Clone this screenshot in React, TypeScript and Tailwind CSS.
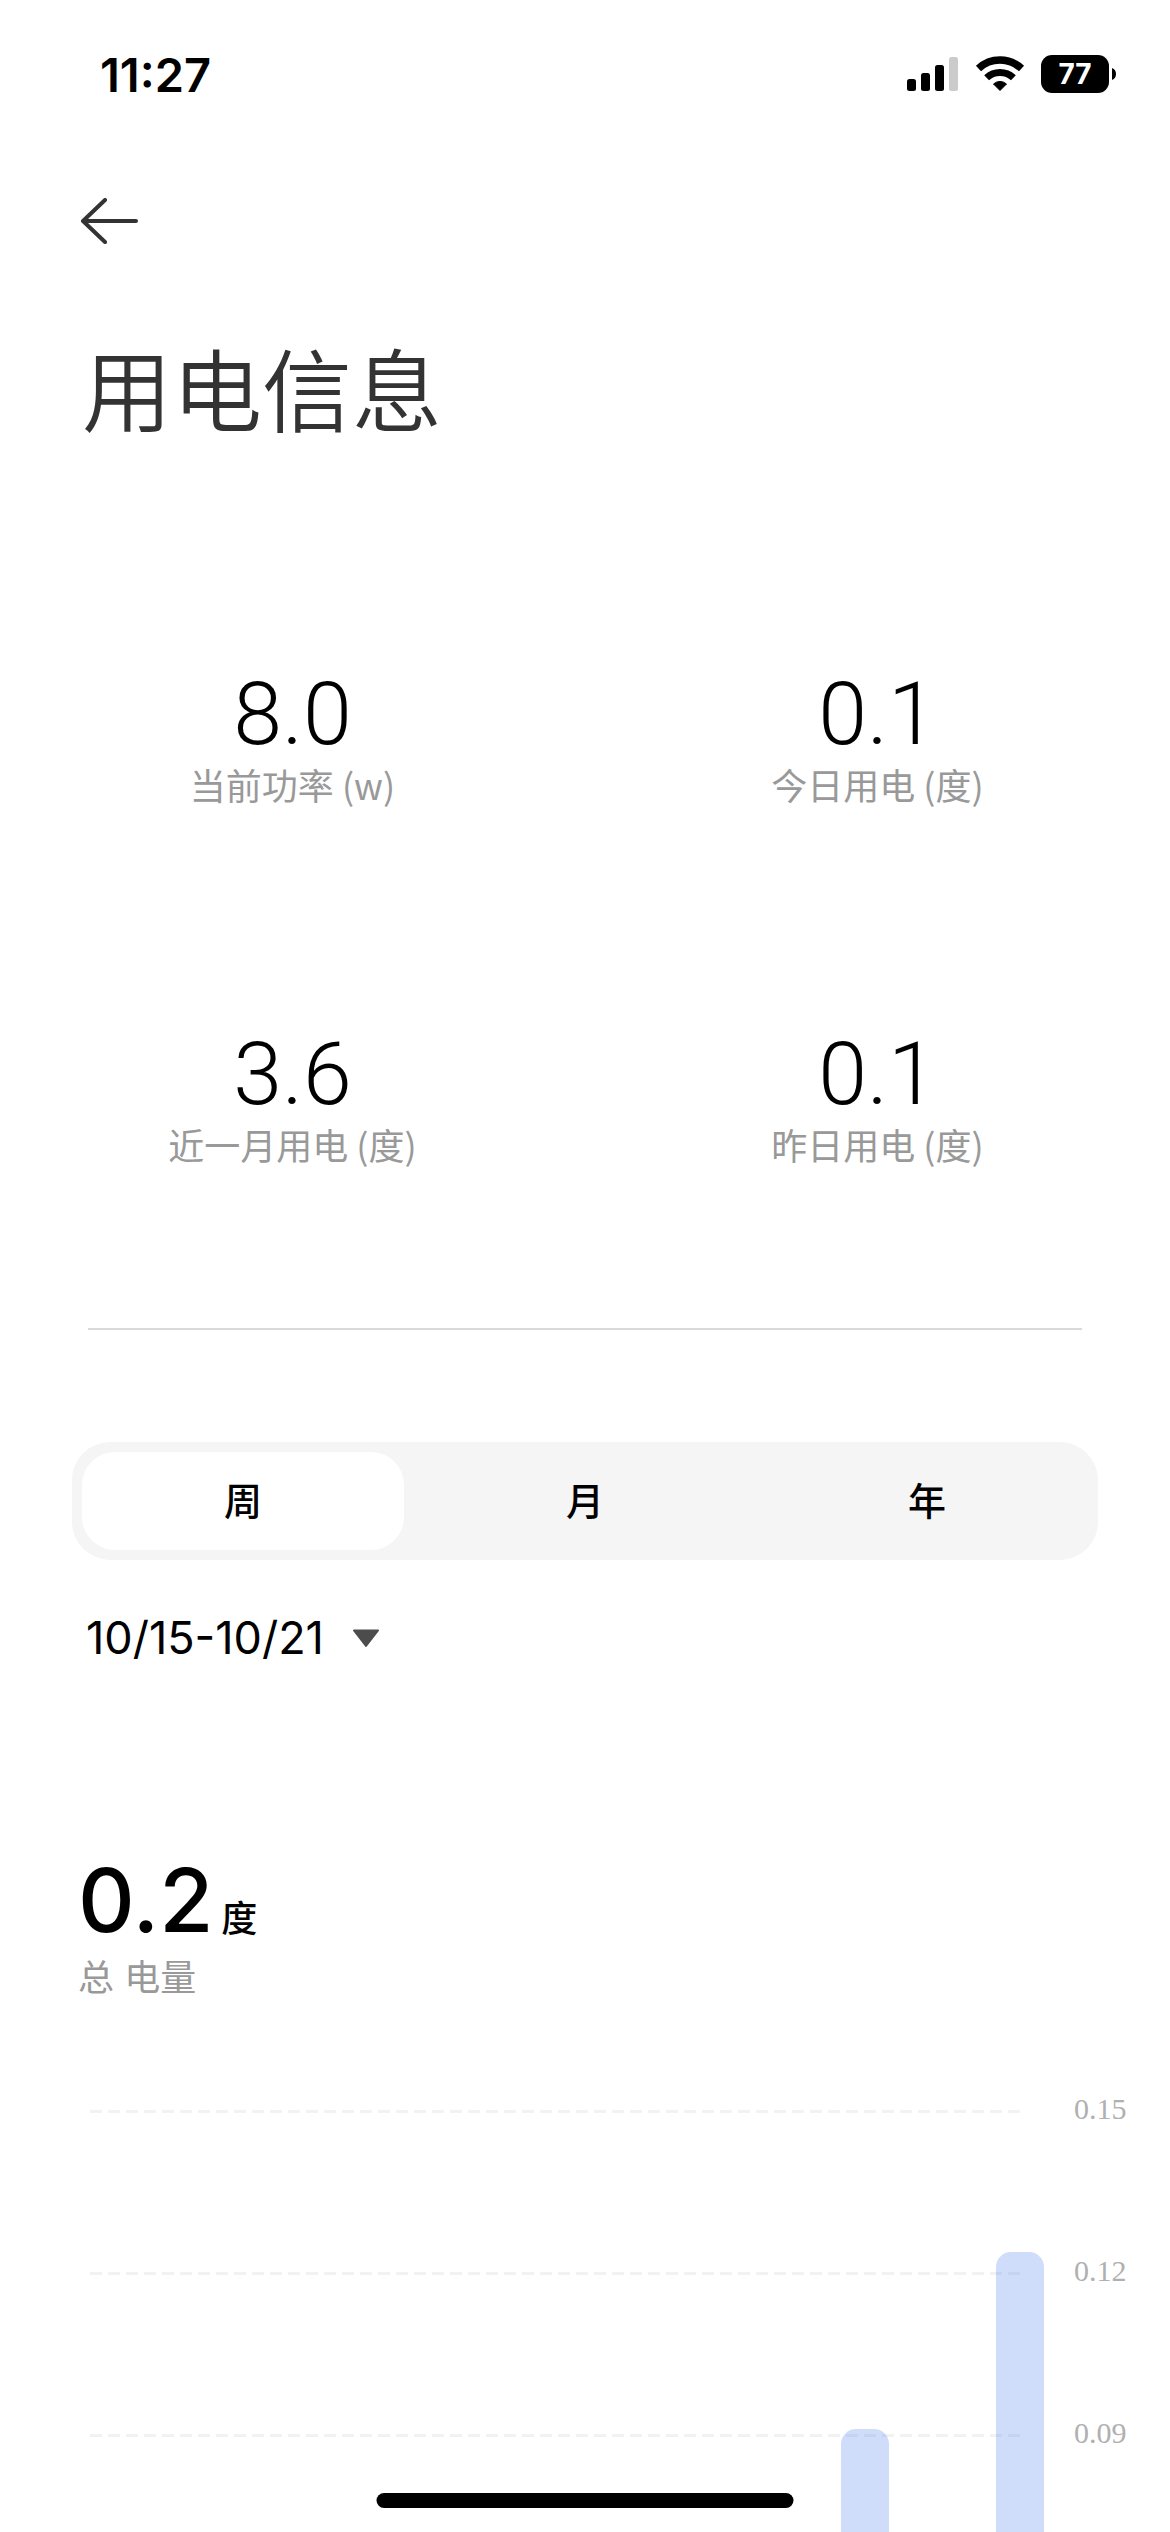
import React, { useState } from "react";

const stats = [
  { value: "8.0", label: "当前功率 (w)" },
  { value: "0.1", label: "今日用电 (度)" },
  { value: "3.6", label: "近一月用电 (度)" },
  { value: "0.1", label: "昨日用电 (度)" },
];

const periods = ["周", "月", "年"];

const MAX = 0.15;
const ticks = ["0.15", "0.12", "0.09"];
const usage = [0, 0, 0, 0, 0, 0.0911, 0.1239];

function StatusBar() {
  return (
    <div className="flex h-[148px] items-center justify-between pl-[100px] pr-[54px]">
      <span className="text-[47px] leading-none font-semibold">11:27</span>
      <div className="flex items-center">
        {/* Signal */}
        <svg className="mr-4 h-[38px] w-[52px]" viewBox="0 0 52 38">
          <rect x="0" y="24" width="9" height="12" rx="2.5" />
          <rect x="14" y="18" width="9" height="18" rx="2.5" />
          <rect x="28" y="10" width="9" height="26" rx="2.5" />
          <rect x="42" y="2" width="9" height="34" rx="2.5" fill="#cbcbcb" />
        </svg>
        {/* Wifi */}
        <svg className="mr-4 h-[38px] w-[50px]" viewBox="0 0 50 38">
          <path d="M3.5 13.5A31.5 31.5 0 0 1 46.5 13.5" fill="none" stroke="#000" strokeWidth="7.5" />
          <path d="M11.6 22.8A19.5 19.5 0 0 1 38.4 22.8" fill="none" stroke="#000" strokeWidth="7" />
          <path d="M25 35.5L18.5 29A9.5 9.5 0 0 1 31.5 29Z" stroke="#000" strokeLinejoin="round" />
        </svg>
        {/* Battery */}
        <div className="flex h-[38px] w-[68px] items-center justify-center rounded-[11px] bg-black text-[28px] leading-none font-bold text-white">
          77
        </div>
        <svg className="ml-[3px] h-3 w-1" viewBox="0 0 4 12">
          <path d="M0 0Q4 1.5 4 6T0 12Z" />
        </svg>
      </div>
    </div>
  );
}

function Stat({ value, label }: { value: string; label: string }) {
  return (
    <div className="flex h-[360px] flex-col items-center pt-[66px]">
      <span className="font-[Roboto,sans-serif] text-[88px] leading-[96px] font-light">{value}</span>
      <span className="font-['Noto_Sans_CJK_SC',sans-serif] text-[36px] leading-[44px] text-[#999999]">{label}</span>
    </div>
  );
}

function Chart() {
  return (
    <div className="relative mt-[26px] min-h-0 flex-1 overflow-hidden">
      {ticks.map((tick) => (
        <div key={tick} className="flex h-[162px] items-center pl-[90px]">
          <div className="h-[3px] flex-1 bg-[repeating-linear-gradient(90deg,#f2f2f2_0_12px,transparent_12px_18px)]" />
          <span className="w-[150px] pb-1 pl-[54px] font-['Liberation_Serif',serif] text-[30px] leading-9 text-[#b0b0b0]">
            {tick}
          </span>
        </div>
      ))}

      {/* Bars over the grid lines */}
      <div className="absolute top-[81px] right-[150px] left-[90px] h-[810px]">
        {usage.map((value, i) => (
          <div
            key={i}
            className="absolute bottom-0 w-12 -translate-x-1/2 rounded-t-[15px] bg-[#4074ec]/25"
            style={{ left: `${(i / (usage.length - 1)) * 100}%`, height: `${(value / MAX) * 100}%` }}
          />
        ))}
      </div>
    </div>
  );
}

export default function App() {
  const [period, setPeriod] = useState("周");

  return (
    <div className="flex h-screen flex-col overflow-hidden bg-white font-[Inter,'Noto_Sans_CJK_SC',sans-serif] text-black">
      <StatusBar />

      <header className="flex flex-col items-start px-20 pt-[50px]">
        <button aria-label="返回">
          <svg className="h-[46px] w-[60px]" viewBox="0 0 60 46" fill="none" stroke="#333" strokeWidth="4" strokeLinecap="round" strokeLinejoin="round">
            <path d="M25 2L3 23L25 44M3 23H56" />
          </svg>
        </button>
        <h1 className="mt-[84px] ml-[2px] text-[90px] leading-[130px] font-[350] text-[#333333]">用电信息</h1>
      </header>

      <section className="mt-[142px] grid grid-cols-2">
        {stats.map((stat) => (
          <Stat key={stat.label} {...stat} />
        ))}
      </section>

      <hr className="mx-[88px] mt-2 border-t-2 border-[#dadada]" />

      <div className="mx-[72px] mt-[112px] flex rounded-[38px] bg-[#f5f5f5]">
        {periods.map((name) => (
          <div key={name} className="flex-1 p-[10px]">
            <button
              onClick={() => setPeriod(name)}
              className={`block h-[98px] w-full rounded-[33px] text-[38px] font-medium ${period === name ? "bg-white" : ""}`}
            >
              {name}
            </button>
          </div>
        ))}
      </div>

      <button className="mt-[46px] ml-[86px] flex items-center gap-7 self-start text-[45px] leading-[64px]">
        10/15-10/21
        <svg className="h-[19px] w-7" viewBox="0 0 28 19">
          <path d="M2 1.5H26L14 17Z" fill="#4c4c4c" stroke="#4c4c4c" strokeWidth="2" strokeLinejoin="round" />
        </svg>
      </button>

      <section className="mt-[182px] ml-[78px]">
        <p className="flex items-baseline gap-2">
          <span className="text-[88px] leading-[96px] font-medium">0.2</span>
          <span className="text-[36px] font-medium">度</span>
        </p>
        <p className="mt-1 text-[36px] leading-[52px] text-[#999999]">总 电量</p>
      </section>

      <Chart />

      {/* Home indicator */}
      <div className="fixed bottom-6 left-1/2 h-[15px] w-[417px] -translate-x-1/2 rounded-full bg-black" />
    </div>
  );
}
